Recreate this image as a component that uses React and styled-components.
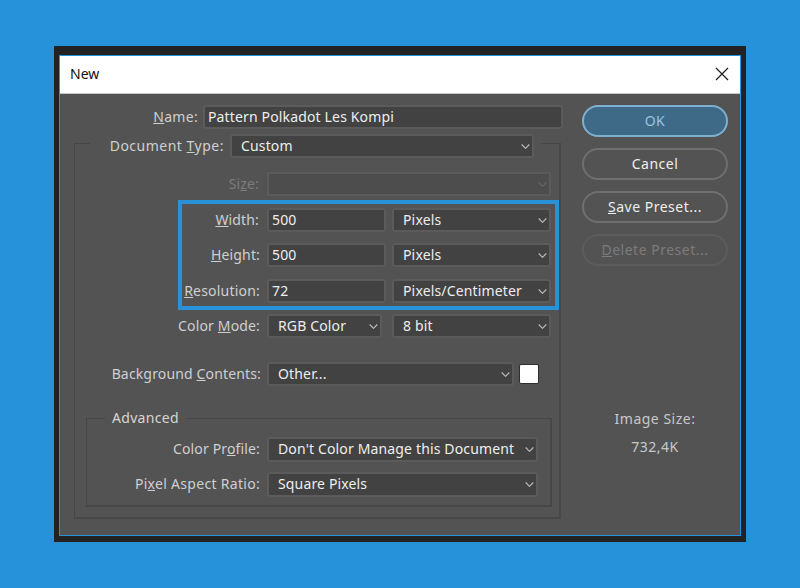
import styled, { createGlobalStyle } from 'styled-components';

const GlobalStyle = createGlobalStyle`
  html, body {
    margin: 0;
    padding: 0;
    background: #2592d9;
  }
  body {
    font-family: "Noto Sans", "Open Sans", sans-serif;
    font-size: 14px;
  }
`;

const Page = styled.div`
  width: 800px;
  height: 588px;
  padding: 46px 0 0 54px;
  box-sizing: border-box;
  overflow: hidden;
`;

const Frame = styled.div`
  width: 692px;
  height: 496px;
  padding: 9px 5px 6px;
  box-sizing: border-box;
  background: #222222;
`;

const Dialog = styled.div`
  height: 100%;
  box-sizing: border-box;
  border: 1px solid #2592d9;
  display: flex;
  flex-direction: column;
`;

const TitleBar = styled.div`
  height: 35px;
  flex: none;
  display: flex;
  align-items: center;
  justify-content: space-between;
  padding: 0 11px 2px 10px;
  background: #ffffff;
  border-bottom: 1px solid #c9c9c9;
  color: #111111;
`;

const CloseIcon = styled.svg`
  width: 14px;
  height: 14px;
  stroke: #222222;
  stroke-width: 1.3;
  fill: none;
`;

const Body = styled.div`
  flex: 1;
  display: flex;
  padding: 11px 0 0 14px;
  background: #535353;
`;

const FormColumn = styled.div`
  width: 487px;
  flex: none;
`;

const SideColumn = styled.div`
  width: 146px;
  margin-left: 21px;
  display: flex;
  flex-direction: column;
  gap: 11px;
`;

const Row = styled.div`
  display: flex;
  align-items: center;
  height: ${(p) => p.$height || 24}px;
  margin-top: ${(p) => p.$top || 0}px;
`;

const DocumentRow = styled(Row)`
  width: 451px;
  padding-right: 7px;
  margin-left: 15px;
  margin-top: -10px;
  box-sizing: border-box;
  background: #535353;
`;

const Label = styled.label`
  width: ${(p) => p.$width}px;
  margin-right: ${(p) => p.$gap}px;
  padding-bottom: 2px;
  flex: none;
  text-align: right;
  white-space: nowrap;
  letter-spacing: ${(p) => p.$track || 0.15}px;
  color: ${(p) => (p.$disabled ? '#7c7c7c' : '#cfcfcf')};
`;

const Field = styled.div`
  width: ${(p) => p.$width}px;
  height: 100%;
  flex: none;
  display: flex;
  align-items: center;
  justify-content: space-between;
  padding: 0 2px 2px ${(p) => p.$pad || 9}px;
  margin-left: ${(p) => p.$left || 0}px;
  box-sizing: border-box;
  border: 2px solid #5b5b5b;
  border-radius: 3px;
  background: ${(p) => (p.$disabled ? '#4d4d4d' : '#424242')};
  color: #eeeeee;
  white-space: nowrap;
  letter-spacing: 0.15px;
`;

const Chevron = styled.svg`
  width: 9px;
  height: 5px;
  flex: none;
  margin-top: 2px;
  fill: none;
  stroke: ${(p) => (p.$disabled ? '#666666' : '#b8b8b8')};
  stroke-width: 1.2;
`;

const MainGroup = styled.div`
  height: 376px;
  margin-top: 14px;
  box-sizing: border-box;
  border: 1px solid #474747;
  border-right-width: 2px;
  border-bottom-width: 2px;
`;

const Highlight = styled.div`
  width: 381px;
  margin: 4px 0 0 103px;
  padding: 4px 0 3px;
  box-sizing: border-box;
  border: 4px solid #2592d9;
  display: flex;
  flex-direction: column;
  gap: 11px;
`;

const Swatch = styled.div`
  width: 20px;
  height: 20px;
  flex: none;
  margin-left: 5px;
  box-sizing: border-box;
  border: 1px solid #2e2e2e;
  border-radius: 2px;
  background: #ffffff;
`;

const AdvancedGroup = styled.div`
  position: relative;
  width: 466px;
  height: 89px;
  margin: 32px 0 0 11px;
  padding-top: 18px;
  box-sizing: border-box;
  border: 1px solid #474747;
  border-right-width: 2px;
  border-bottom-width: 2px;
`;

const Legend = styled.span`
  position: absolute;
  top: -11px;
  left: 18px;
  padding: 0 7px;
  line-height: 20px;
  letter-spacing: 0.3px;
  background: #535353;
  color: #d6d6d6;
`;

const DialogButton = styled.button`
  height: 32px;
  padding: 0 0 1px;
  box-sizing: border-box;
  border: 2px solid ${(p) => (p.$primary ? '#7fb0cf' : p.$disabled ? '#5c5c5c' : '#6f6f6f')};
  border-radius: 16px;
  background: ${(p) => (p.$primary ? '#3f6a87' : 'transparent')};
  color: ${(p) => (p.$primary ? '#9cc3dc' : p.$disabled ? '#7b7b7b' : '#eeeeee')};
  font: inherit;
  letter-spacing: 0.5px;
`;

const SizeInfo = styled.div`
  margin-top: 132px;
  display: flex;
  flex-direction: column;
  align-items: center;
  gap: 8px;
  line-height: 20px;
  letter-spacing: 0.5px;
  color: #c8c8c8;
`;

const Arrow = ({ disabled }) => (
  <Chevron viewBox="0 0 9 5" $disabled={disabled}>
    <path d="M.7.5l3.8 3.8L8.3.5" />
  </Chevron>
);

const Select = ({ value, width, pad, left, disabled }) => (
  <Field $width={width} $pad={pad} $left={left} $disabled={disabled}>
    <span>{value}</span>
    <Arrow disabled={disabled} />
  </Field>
);

export default function App() {
  return (
    <Page>
      <GlobalStyle />
      <Frame>
        <Dialog>
          <TitleBar>
            <span>New</span>
            <CloseIcon viewBox="0 0 14 14">
              <path d="M1 1l12 12M13 1L1 13" />
            </CloseIcon>
          </TitleBar>
          <Body>
            <FormColumn>
              <Row>
                <Label $width={124} $gap={5} $track={0.3}><u>N</u>ame:</Label>
                <Field $width={360} $pad={3}>Pattern Polkadot Les Kompi</Field>
              </Row>
              <MainGroup>
                <DocumentRow>
                  <Label $width={134} $gap={6} $track={0.5}>Document <u>T</u>ype:</Label>
                  <Select value="Custom" width={304} />
                </DocumentRow>
                <Row $top={14}>
                  <Label $width={184} $gap={8} $disabled>Si<u>z</u>e:</Label>
                  <Select value="" width={284} disabled />
                </Row>
                <Highlight>
                  <Row>
                    <Label $width={77} $gap={8}><u>W</u>idth:</Label>
                    <Field $width={119} $pad={3}>500</Field>
                    <Select value="Pixels" width={159} left={6} />
                  </Row>
                  <Row>
                    <Label $width={78} $gap={7}><u>H</u>eight:</Label>
                    <Field $width={119} $pad={3}>500</Field>
                    <Select value="Pixels" width={159} left={6} />
                  </Row>
                  <Row $top={1}>
                    <Label $width={78} $gap={7} $track={0.2}><u>R</u>esolution:</Label>
                    <Field $width={119} $pad={3}>72</Field>
                    <Select value="Pixels/Centimeter" width={159} left={6} />
                  </Row>
                </Highlight>
                <Row $top={4}>
                  <Label $width={185} $gap={7}>Color <u>M</u>ode:</Label>
                  <Select value="RGB Color" width={115} />
                  <Select value="8 bit" width={159} left={10} />
                </Row>
                <Row $top={24}>
                  <Label $width={186} $gap={6}>Background <u>C</u>ontents:</Label>
                  <Select value="Other..." width={247} />
                  <Swatch />
                </Row>
                <AdvancedGroup>
                  <Legend>Advanced</Legend>
                  <Row $height={25}>
                    <Label $width={173} $gap={7}>Color Pr<u>o</u>file:</Label>
                    <Select value="Don't Color Manage this Document" width={271} />
                  </Row>
                  <Row $height={25} $top={10}>
                    <Label $width={173} $gap={7} $track={0.3}>Pi<u>x</u>el Aspect Ratio:</Label>
                    <Select value="Square Pixels" width={271} />
                  </Row>
                </AdvancedGroup>
              </MainGroup>
            </FormColumn>
            <SideColumn>
              <DialogButton $primary>OK</DialogButton>
              <DialogButton>Cancel</DialogButton>
              <DialogButton><u>S</u>ave Preset...</DialogButton>
              <DialogButton $disabled><u>D</u>elete Preset...</DialogButton>
              <SizeInfo>
                <span>Image Size:</span>
                <span>732,4K</span>
              </SizeInfo>
            </SideColumn>
          </Body>
        </Dialog>
      </Frame>
    </Page>
  );
}
